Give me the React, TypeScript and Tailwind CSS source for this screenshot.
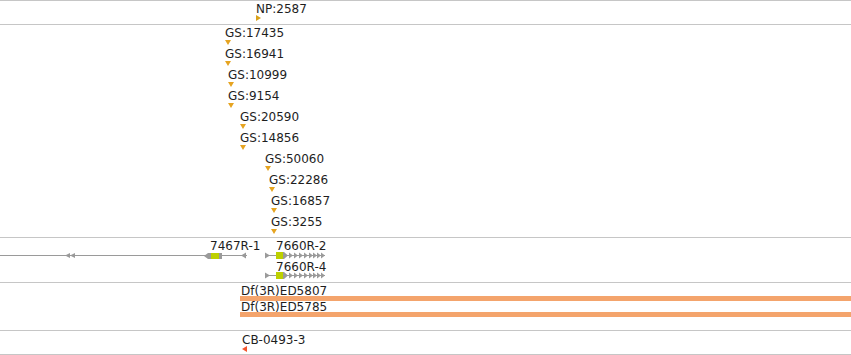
import React from "react"

// insertion sites in the GS track (x = position on the ruler)
const gsSites = [
  { id: "GS:17435", x: 225 },
  { id: "GS:16941", x: 225 },
  { id: "GS:10999", x: 228 },
  { id: "GS:9154", x: 228 },
  { id: "GS:20590", x: 240 },
  { id: "GS:14856", x: 240 },
  { id: "GS:50060", x: 265 },
  { id: "GS:22286", x: 269 },
  { id: "GS:16857", x: 271 },
  { id: "GS:3255", x: 271 },
]

const deficiencies = ["Df(3R)ED5807", "Df(3R)ED5785"]

// 7660R transcript drawn forward, centred on row y
const ForwardGene = ({ y }: { y: number }) => {
  const ticks = [289, 294, 299, 304, 309, 313, 317, 321]
  return (
    <g fill="#9a9a9a">
      <rect x={265} y={y} width={60} height={1} />
      <polygon points={`265,${y - 2.5} 270,${y + 0.5} 265,${y + 3.5}`} />
      <rect x={276} y={y - 3} width={7} height={7} fill="#bdd000" />
      <polygon points={`283,${y - 3} 284,${y - 3} 288,${y + 0.5} 284,${y + 4} 283,${y + 4}`} />
      {ticks.map((t) => (
        <polygon key={t} points={`${t},${y - 2.5} ${t + 4},${y + 0.5} ${t},${y + 3.5}`} />
      ))}
    </g>
  )
}

export default function App() {
  return (
    <div className="w-[851px] h-[355px] bg-white overflow-hidden font-['DejaVu_Sans',sans-serif] text-[12px] leading-none text-[#1e1e1e]">
      {/* NP track */}
      <div className="h-[24px] border-t border-[#c6c6c6] pl-[256px] pt-[2px] flex flex-col">
        <span>NP:2587</span>
        <div className="w-0 h-0 border-y-[3px] border-y-transparent border-l-[5px] border-l-[#d9a21b]" />
      </div>

      {/* GS insertions */}
      <div className="h-[213px] border-t border-[#c6c6c6] pt-[2px] flex flex-col">
        {gsSites.map((s) => (
          <div key={s.id} className="h-[21px] flex flex-col items-start" style={{ paddingLeft: s.x }}>
            <span>{s.id}</span>
            <div className="mt-[1px] w-0 h-0 border-x-[3px] border-x-transparent border-t-[5px] border-t-[#e6a421]" />
          </div>
        ))}
      </div>

      {/* gene models */}
      <div className="relative h-[45px] border-t border-[#c6c6c6]">
        <svg className="absolute inset-0" width={851} height={44}>
          <g fill="#9a9a9a">
            <rect x={0} y={17} width={247} height={1} />
            <polygon points="65,17.5 70,15 70,20" />
            <polygon points="70,17.5 75,15 75,20" />
            <polygon points="204,18 208,15 211,15 211,21 208,21" />
            <rect x={211} y={15} width={8} height={6} fill="#bdd000" />
            <rect x={219} y={15} width={3} height={6} />
            <polygon points="241,17.5 246,14.5 246,20.5" />
          </g>
          <ForwardGene y={17} />
          <ForwardGene y={37} />
        </svg>
        <div className="relative flex pt-[2px] pl-[210px]">
          <span className="w-[66px]">7467R-1</span>
          <div className="flex flex-col gap-[9px]">
            <span>7660R-2</span>
            <span>7660R-4</span>
          </div>
        </div>
      </div>

      {/* deficiencies */}
      <div className="h-[48px] border-t border-[#c6c6c6] pt-[2px] pl-[240px] flex flex-col">
        {deficiencies.map((d) => (
          <div key={d} className="flex flex-col">
            <span className="pl-[1px]">{d}</span>
            <div className="-mt-[1px] h-[5px] bg-[#f4a46c]" />
          </div>
        ))}
      </div>

      {/* CB track */}
      <div className="h-[25px] border-y border-[#c6c6c6] pt-[3px] pl-[242px] flex flex-col">
        <span>CB-0493-3</span>
        <div className="w-0 h-0 border-y-[3px] border-y-transparent border-r-[5px] border-r-[#f4552e]" />
      </div>
    </div>
  )
}
